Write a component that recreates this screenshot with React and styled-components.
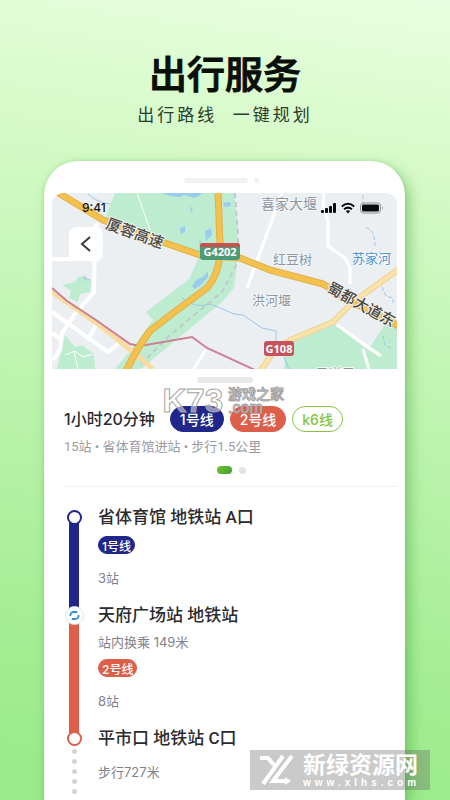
import styled, { createGlobalStyle, css } from "styled-components"

const GlobalStyle = createGlobalStyle`
    * {
        box-sizing: border-box;
    }
    body {
        margin: 0;
        font-family: Inter, "Noto Sans CJK SC", sans-serif;
        color: #2b2b2e;
    }
    h1, h2, h3, p, ol {
        margin: 0;
        padding: 0;
        list-style: none;
    }
`

const NAVY = "#20268a"
const RED = "#dd5f4a"
const GREEN = "#86c440"

const Page = styled.div`
    position: relative;
    display: flex;
    flex-direction: column;
    height: 100vh;
    overflow: hidden;
    background: linear-gradient(188deg, #e8ffdf 0%, #d6fac9 20%, #bdf4ae 50%, #a4ed94 80%, #9ae98a 100%);
`
const Hero = styled.header`
    padding-top: 48px;
    text-align: center;
    color: #0a0f0a;
`
const HeroTitle = styled.h1`
    font-size: 38px;
    line-height: 52px;
    font-weight: 500;
    -webkit-text-stroke: 1px #0a0f0a;
`
const HeroText = styled.p`
    font-size: 17px;
    line-height: 30px;
    letter-spacing: 3px;
    white-space: pre;
    color: #2a3d2c;
`
const Phone = styled.main`
    flex: 1;
    margin: 31px 45px 0 44px;
    padding: 0 8px;
    border-radius: 34px 34px 0 0;
    background: #fff;
    box-shadow: 5px 6px 14px rgba(60, 160, 50, 0.45), 0 0 4px rgba(90, 190, 80, 0.3);
`
const Speaker = styled.div`
    display: flex;
    align-items: center;
    justify-content: center;
    gap: 6px;
    height: 32px;
    padding: 6px 6px 0 0;

    &::before, &::after {
        content: "";
        width: 64px;
        height: 5px;
        border-radius: 3px;
        background: #f2f2f3;
    }
    &::after {
        width: 5px;
    }
`
const MapPanel = styled.section`
    position: relative;
    height: 176px;
    border-radius: 12px 12px 0 0;
    overflow: hidden;
    background: #eceff2;
`
const MapDrawing = styled.svg`
    display: block;
    width: 100%;
    height: 100%;
`
const StatusBar = styled.div`
    position: absolute;
    top: 3px;
    left: 30px;
    right: 13px;
    display: flex;
    align-items: center;
    justify-content: space-between;
    font-size: 12px;
    line-height: 24px;
    font-weight: 500;
    color: #111;
`
const StatusIcons = styled.svg`
    width: 64px;
    height: 14px;
`
const BackButton = styled.button`
    position: absolute;
    top: 34px;
    left: 17px;
    display: flex;
    align-items: center;
    justify-content: center;
    width: 34px;
    height: 34px;
    padding: 0;
    border: 0;
    border-radius: 7px;
    background: #fff;
    cursor: pointer;
`
const Summary = styled.section`
    position: relative;
    padding: 8px 12px 0;
`
const Handle = styled.div`
    width: 56px;
    height: 6px;
    margin: 0 auto;
    border-radius: 3px;
    background: #e9e9ea;
`
const SummaryRow = styled.div`
    display: flex;
    align-items: center;
    margin-top: 23px;
    gap: 6px;
`
const Duration = styled.h2`
    margin-right: 9px;
    font-size: 16px;
    line-height: 26px;
    font-weight: 500;
    white-space: nowrap;
`
const Pill = styled.span`
    display: inline-flex;
    align-items: center;
    justify-content: center;
    border-radius: 13px;
    color: ${props => props.$outlined ? GREEN : "#fff"};
    background: ${props => props.$outlined ? "#fff" : props.$color};
    border: 1px solid ${props => props.$color};
    font-weight: 500;
    white-space: nowrap;
    ${props => props.$small
        ? css`
            padding: 0 3px;
            height: 18px;
            font-size: 12px;`
        : css`
            padding: 0 9px;
            height: 26px;
            font-size: 14px;`}
`
const Facts = styled.p`
    margin-top: 5px;
    font-family: Roboto, "Noto Sans CJK SC", sans-serif;
    font-size: 13px;
    line-height: 20px;
    color: #9b9b9f;
`
const Pager = styled.div`
    display: flex;
    justify-content: center;
    align-items: center;
    gap: 7px;
    height: 8px;
    margin-top: 9px;
    padding-left: 14px;
`
const PagerDot = styled.span`
    width: ${props => props.$active ? "15px" : "7px"};
    height: ${props => props.$active ? "8px" : "7px"};
    border-radius: 4px;
    background: ${props => props.$active ? "linear-gradient(135deg, #74c02b, #3f9f39)" : "#e4e4e6"};
`
const Route = styled.ol`
    margin: 12px 0 0 12px;
    padding-top: 18px;
    border-top: 1px solid #f1f1f2;
`
const Step = styled.li`
    display: flex;
    gap: 14px;
`
const Rail = styled.div`
    display: flex;
    flex-direction: column;
    align-items: center;
    width: 20px;
    padding-top: ${props => props.$transfer ? "3px" : "5px"};
`
const Node = styled.span`
    position: relative;
    z-index: 1;
    width: 15px;
    height: 15px;
    border: 2px solid ${props => props.$color};
    border-radius: 50%;
    background: #fff;
`
const TransferNode = styled.svg`
    position: relative;
    z-index: 1;
    flex: none;
    width: 19px;
    height: 19px;
`
const Bar = styled.span`
    flex: 1;
    width: 10px;
    margin: -2px 0 -7px;
    background: ${props => props.$color};
`
const Walk = styled.span`
    display: flex;
    flex-direction: column;
    gap: 5px;
    margin-top: 3px;

    i {
        width: 5px;
        height: 5px;
        border-radius: 50%;
        background: #d3d3d6;
    }
`
const StepBody = styled.div`
    display: flex;
    flex-direction: column;
    align-items: flex-start;
    padding-bottom: 15px;
`
const StepTitle = styled.h3`
    font-family: Roboto, "Noto Sans CJK SC", sans-serif;
    font-size: 17px;
    line-height: 24px;
    font-weight: 500;
`
const Note = styled.p`
    margin: 5px 0 0;
    font-size: 13px;
    line-height: 20px;
    color: #818187;
`
const WalkNote = styled(Note)`
    margin-top: 12px;
`
const LineTag = styled.div`
    display: flex;
    margin: 7px 0 9px;
`
const GameMark = styled.div`
    position: absolute;
    top: 14px;
    left: 50%;
    display: flex;
    align-items: center;
    gap: 5px;
    margin-left: -62px;
    color: rgba(255, 255, 255, 0.5);
    -webkit-text-stroke: 1px #a3a3a3;
    font-family: "Liberation Sans", "Noto Sans CJK SC", sans-serif;
    font-weight: 700;
`
const GameLogo = styled.span`
    font-size: 33px;
    line-height: 36px;
`
const GameName = styled.span`
    display: flex;
    flex-direction: column;
    font-size: 14px;
    line-height: 14px;
    white-space: nowrap;
    font-weight: 500;
`
const GameDomain = styled.span`
    font-size: 16px;
`
const SiteMark = styled.div`
    position: absolute;
    right: 20px;
    bottom: 10px;
    display: flex;
    align-items: center;
    gap: 8px;
    width: 180px;
    height: 40px;
    padding-left: 9px;
    color: #fff;
    background: rgba(90, 90, 90, 0.32);
`
const SiteLogo = styled.svg`
    width: 36px;
    height: 32px;
`
const SiteName = styled.div`
    font-size: 23px;
    line-height: 26px;
    font-weight: 700;
    white-space: nowrap;

    small {
        display: block;
        font-family: "Liberation Sans", sans-serif;
        font-size: 10px;
        line-height: 10px;
        letter-spacing: 4px;
    }
`

const steps = [
    { title: "省体育馆 地铁站 A口", line: "1号线", color: NAVY, stops: "3站" },
    { title: "天府广场站 地铁站", transfer: "站内换乘 149米", line: "2号线", color: RED, stops: "8站" },
    { title: "平市口 地铁站 C口", color: RED, walk: "步行727米" },
]

function CityMap() {
    return (
        <MapDrawing viewBox="52 193 345 176" preserveAspectRatio="xMidYMid slice" fill="none" aria-hidden="true">
            <rect x="52" y="193" width="345" height="176" fill="#eceff2" />
            {/* parks */}
            <g fill="#bdecd0">
                <path d="M115 193 L105 218 L165 243 L200 254 L196 264 L189 279 L146 312 L153 320 L134 346 L115 369 H141 L170 345 L222 302 L234 288 L237 262 L238 225 L234 193 Z" />
                <path d="M62 285 L75 282 L79 276 L91 280 L90 292 L80 294 L78 302 L69 298 L71 291 Z" />
                <path d="M65 335 L75 347 L82 345 L94 354 L95 369 H57 Z" />
                <path d="M286 345 L334 324 L365 348 L381 357 L393 369 H284 Z" />
                <path d="M385 324 L397 327 V369 H388 L370 347 Z" />
            </g>
            {/* water */}
            <g fill="#9ccbf2">
                <path d="M162 193 Q172 197 180 197 L184 195 L195 198 L203 193 Z" />
                <path d="M180 228 l5 -2 v6 l-4 2 Z M205 231 l6 -3 1 7 -6 6 Z M202 243 l4 3 -4 4 Z M190 206 l3 4 -2 3 Z M223 203 l7 -1 1 4 -6 1 Z" />
                <path d="M192 286 l4 -6 7 -3 5 -6 0 6 -6 7 -7 5 Z" />
            </g>
            <g stroke="#9dc6e8" strokeWidth="1">
                <path d="M88 194 Q96 202 110 204 M200 240 V256 M182 298 Q195 309 211 304 L234 314 L243 315 L252 321 L262 328 L276 331 V343 M284 357 L289 369" />
                <path d="M363 195 V210 M366 228 Q375 229 375 247 M382 287 L386 296 L393 298 V304 M383 336 L385 345 L391 348" strokeDasharray="4 2" />
                <path d="M82 277 l8 3 M85 275 v6" />
            </g>
            {/* minor streets */}
            <g stroke="#fff" strokeWidth="4" strokeLinejoin="round">
                <path d="M98 223 L95 228 L94 292 L75 314 L62 333 L60 350 L53 360 M52 259 H73 M52 312 L108 352 L119 343 M89 338 L96 325 M52 333 L62 340" />
                <path d="M282 193 L247 288 M324 193 L323 208 L328 220 V246 L345 258 L350 268 V284 M206 349 L194 369 M363 349 L365 356 L369 369 M337 325 L381 356" strokeWidth="3" />
                <path d="M137 193 L150 230" strokeWidth="1" />
                <path d="M65 355 l10 -4 8 6 10 -3 M78 369 l-4 -18" strokeWidth="1" />
            </g>
            <path d="M235 193 L238 235 V262 L222 292 L170 335 L138 367" stroke="#c3c8cc" strokeWidth="2" strokeDasharray="5 4" />
            {/* main roads */}
            <path d="M52 292 L98 324 L128 348 L153 369" stroke="#f8dca2" strokeWidth="5" />
            <path d="M399 269 L353 302 L333 322 L290 340 L273 353 L260 371" stroke="#ecd095" strokeWidth="6" />
            <path d="M399 269 L353 302 L333 322 L290 340 L273 353 L260 371" stroke="#fae3a8" strokeWidth="4" />
            <path d="M52 288 L67 301 L96 320 L130 344 L140 346 L192 337 L207 348 L255 370" stroke="#cd7f94" strokeWidth="2" />
            <g stroke="#e2b14a" strokeWidth="7" strokeLinejoin="round">
                <path d="M218 190 L220 245 Q221 272 207 288 L173 313 L150 331 Q137 348 126 371" />
                <path d="M57 192 L103 220 L165 243 L200 255 L240 258 L270 270 L323 284 L350 301 L399 326" />
            </g>
            <g stroke="#f2c14e" strokeWidth="5" strokeLinejoin="round">
                <path d="M218 190 L220 245 Q221 272 207 288 L173 313 L150 331 Q137 348 126 371" />
                <path d="M57 192 L103 220 L165 243 L200 255 L240 258 L270 270 L323 284 L350 301 L399 326" />
            </g>
            {/* place names */}
            <g fill="#8d969f" fontSize="13" stroke="#f4f6f8" strokeWidth="2" paintOrder="stroke">
                <text x="261" y="209" fontSize="14">喜家大堰</text>
                <text x="273" y="264">红豆树</text>
                <text x="252" y="305">洪河堰</text>
                <text x="316" y="378">马道子</text>
                <text x="352" y="263" fill="#4c97d3">苏家河</text>
            </g>
            <g fill="#4c4a48" fontSize="15" fontWeight="500" stroke="#f3f1ec" strokeWidth="2" paintOrder="stroke">
                <text transform="translate(105 228) rotate(20)">厦蓉高速</text>
                <text transform="translate(326 291) rotate(29)">蜀都大道东</text>
            </g>
            <rect x="200" y="243" width="40" height="17" rx="3" fill="#4f9a76" />
            <path d="M200 247 V246 Q200 243 203 243 H237 Q240 243 240 246 V247 Z" fill="#c8504f" />
            <rect x="264" y="341" width="30" height="15" rx="3" fill="#c4535b" />
            <g fill="#fff" fontSize="11" fontWeight="700" fontFamily="Noto Sans, sans-serif" textAnchor="middle">
                <text x="220" y="256">G4202</text>
                <text x="279" y="353">G108</text>
            </g>
        </MapDrawing>
    )
}

function PhoneStatus() {
    return (
        <StatusBar>
            <span>9:41</span>
            <StatusIcons viewBox="0 0 64 14" fill="#0b0b0b" aria-hidden="true">
                <rect x="1" y="9" width="3" height="3" rx="1" />
                <rect x="5" y="7" width="3" height="5" rx="1" />
                <rect x="9" y="5" width="3" height="7" rx="1" />
                <rect x="13" y="2" width="3" height="10" rx="1" />
                <path d="M28 12.4 L25.8 10 Q28 8.4 30.2 10 Z" />
                <path d="M24.1 8.2 Q28 5 31.9 8.2 M21.8 5.4 Q28 .2 34.2 5.4" fill="none" stroke="#0b0b0b" strokeWidth="2" />
                <rect x="40.5" y="2" width="20" height="10" rx="3" fill="none" stroke="#8f9296" />
                <rect x="42" y="3.5" width="17" height="7" rx="1.5" />
                <path d="M62 5 Q63.6 7 62 9 Z" fill="#8f9296" />
            </StatusIcons>
        </StatusBar>
    )
}

function RouteStep({ step }) {
    return (
        <Step>
            <Rail $transfer={step.transfer}>
                {step.transfer
                    ? <TransferNode viewBox="0 0 19 19" fill="none" aria-hidden="true">
                        <circle cx="9.5" cy="9.5" r="9" fill="#fff" stroke="#dfe1e6" />
                        <path d="M5.4 10 Q5.2 6 9 6 H12.2 M13.6 9 Q13.8 13 10 13 H6.8" stroke="#2f8fd8" strokeWidth="1.8" />
                    </TransferNode>
                    : <Node $color={step.color} />
                }
                {step.line ? <Bar $color={step.color} /> : null}
                {step.walk
                    ? <Walk><i /><i /><i /><i /><i /></Walk>
                    : null}
            </Rail>
            <StepBody>
                <StepTitle>{step.title}</StepTitle>
                {step.transfer ? <Note>{step.transfer}</Note> : null}
                {step.line ? <LineTag><Pill $small $color={step.color}>{step.line}</Pill></LineTag> : null}
                {step.stops ? <Note>{step.stops}</Note> : null}
                {step.walk ? <WalkNote>{step.walk}</WalkNote> : null}
            </StepBody>
        </Step>
    )
}

export default function App() {
    return (
        <Page>
            <GlobalStyle />
            <Hero>
                <HeroTitle>出行服务</HeroTitle>
                <HeroText>出行路线  一键规划</HeroText>
            </Hero>
            <Phone>
                <Speaker />
                <MapPanel>
                    <CityMap />
                    <PhoneStatus />
                    <BackButton aria-label="返回">
                        <svg width="12" height="18" viewBox="0 0 12 18" fill="none" stroke="#3c3c40" strokeWidth="2">
                            <path d="M10 2 L2 9 L10 16" />
                        </svg>
                    </BackButton>
                </MapPanel>
                <Summary>
                    <Handle />
                    <SummaryRow>
                        <Duration>1小时20分钟</Duration>
                        <Pill $color={NAVY}>1号线</Pill>
                        <Pill $color={RED}>2号线</Pill>
                        <Pill $color={GREEN} $outlined>k6线</Pill>
                    </SummaryRow>
                    <Facts>15站 • 省体育馆进站 • 步行1.5公里</Facts>
                    <Pager>
                        <PagerDot $active />
                        <PagerDot />
                    </Pager>
                    <GameMark>
                        <GameLogo>K73</GameLogo>
                        <GameName>
                            游戏之家
                            <GameDomain>.com</GameDomain>
                        </GameName>
                    </GameMark>
                </Summary>
                <Route>
                    {steps.map(step => <RouteStep key={step.title} step={step} />)}
                </Route>
            </Phone>
            <SiteMark>
                <SiteLogo viewBox="0 0 36 32" fill="none" stroke="#fff" aria-hidden="true">
                    <path d="M1 4 H9 L15 11 M24 2 L4 30" strokeWidth="4" />
                    <path d="M33 2 L14 27 H27" strokeWidth="4" />
                    <path d="M26 23 L32 27 L26 31 Z" fill="#fff" stroke="none" />
                </SiteLogo>
                <SiteName>新绿资源网<small>www.xlhs.com</small></SiteName>
            </SiteMark>
        </Page>
    )
}
